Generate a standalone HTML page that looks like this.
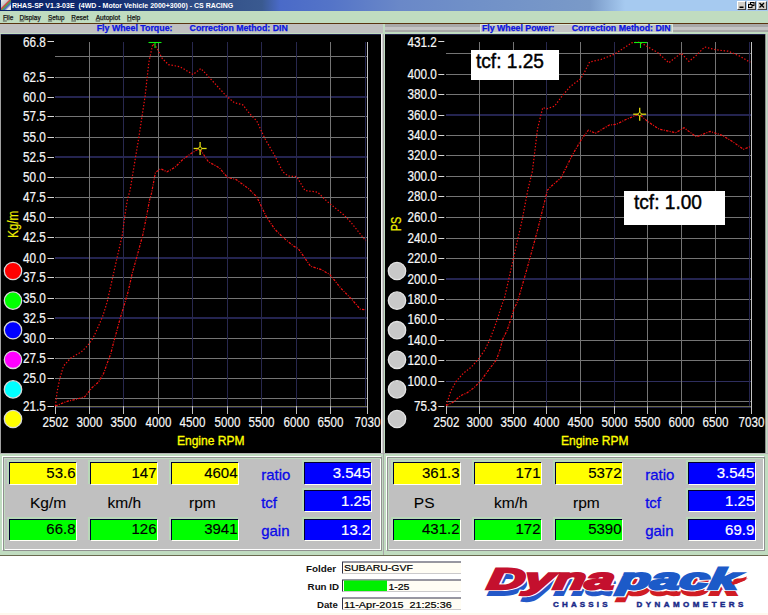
<!DOCTYPE html>
<html><head><meta charset="utf-8">
<style>
*{margin:0;padding:0;box-sizing:border-box}
html,body{width:768px;height:615px;overflow:hidden;background:#ffffff;font-family:"Liberation Sans", sans-serif}
.a{position:absolute}
svg{position:absolute;left:0;top:0}
</style></head><body>
<div class="a" style="left:0;top:0;width:768px;height:11px;background:linear-gradient(90deg,#0a246a 0,#0f2a70 100px,#2e4a84 180px,#3a5a90 262px,#4a6ac8 280px,#5474c8 330px,#6a88c8 400px,#7090c8 470px,#7a9ac8 590px,#a6caf0 625px,#a6caf0 768px)"></div>
<div class="a" style="left:1px;top:0;width:9.5px;height:10px;background:linear-gradient(135deg,#f0f0f0 0%,#c8c8c8 35%,#d04848 45%,#50a050 55%,#4868c8 65%,#e8e8e8 80%)"></div>
<div class="a" style="left:737px;top:1px;width:8.5px;height:8.5px;background:#d4d0c8;border:1px solid;border-color:#fff #404040 #404040 #fff"></div>
<div class="a" style="left:746.5px;top:1px;width:9px;height:8.5px;background:#d4d0c8;border:1px solid;border-color:#fff #404040 #404040 #fff"></div>
<div class="a" style="left:757px;top:1px;width:9.5px;height:8.5px;background:#d4d0c8;border:1px solid;border-color:#fff #404040 #404040 #fff"></div>
<div class="a" style="left:0;top:11px;width:768px;height:12px;background:#c0dcc0"></div>
<div class="a" style="left:0;top:23px;width:768px;height:1px;background:#5a3410"></div>
<div class="a" style="left:0;top:24px;width:383px;height:10px;background:#c0c0c0"></div>
<div class="a" style="left:383px;top:24px;width:2px;height:10px;background:#c0dcc0"></div>
<div class="a" style="left:385px;top:24px;width:383px;height:10px;background:linear-gradient(180deg,#a8a8a8 0 2.6px,#c4c4c4 2.6px 5.7px,#a8a8a8 5.7px 8px,#c0dcc0 8px 10px)"></div>
<div class="a" style="left:480px;top:24px;width:193px;height:9px;background:#c4c4c4;border:1px solid #d8e8d8"></div>
<div class="a" style="left:0;top:33px;width:768px;height:1px;background:#c0dcc0"></div>
<div class="a" style="left:0;top:34px;width:1px;height:419px;background:#a0a0a0"></div>
<div class="a" style="left:1px;top:34px;width:380px;height:419px;background:#000;border-top:1px solid #202048"></div>
<div class="a" style="left:381px;top:34px;width:1px;height:419px;background:#f4f4f4"></div>
<div class="a" style="left:382px;top:34px;width:1px;height:419px;background:#d0d0d0"></div>
<div class="a" style="left:383px;top:34px;width:1px;height:419px;background:#a8a8a8"></div>
<div class="a" style="left:384px;top:34px;width:1px;height:419px;background:#c0dcc0"></div>
<div class="a" style="left:385px;top:34px;width:380px;height:419px;background:#000;border-top:1px solid #202048"></div>
<div class="a" style="left:765px;top:34px;width:3px;height:419px;background:linear-gradient(90deg,#909090 0 1px,#c0dcc0 1px 2px,#c4c4c4 2px 3px)"></div>
<div class="a" style="left:0;top:453px;width:768px;height:103px;background:#c0dcc0"></div>
<div class="a" style="left:0;top:453px;width:768px;height:1px;background:#b4b4b4"></div>
<div class="a" style="left:2px;top:456px;width:380px;height:95px;background:#c0c0c0;border:1px solid;border-color:#fff #909090 #909090 #fff;box-shadow:inset 1px 1px 0 #909090,inset 2px 2px 0 #c0dcc0,inset -1px -1px 0 #fff"></div>
<div class="a" style="left:386px;top:456px;width:379px;height:95px;background:#c0c0c0;border:1px solid;border-color:#fff #909090 #909090 #fff;box-shadow:inset 1px 1px 0 #909090,inset 2px 2px 0 #c0dcc0,inset -1px -1px 0 #fff"></div>
<div class="a" style="left:383px;top:453px;width:1px;height:102px;background:#a8a8a8"></div>
<div class="a" style="left:0;top:555px;width:768px;height:1px;background:#6a6a50"></div>
<div class="a" style="left:0;top:613px;width:768px;height:2px;background:#fff9ee"></div>
<svg width="768" height="615" font-family='"Liberation Sans", sans-serif'>
<text x="12.00" y="8.20" font-size="8" fill="#ffffff" text-anchor="start" font-weight="bold" textLength="221.30" lengthAdjust="spacingAndGlyphs" xml:space="preserve">RHAS-SP V1.3-03E &#160;(4WD - Motor Vehicle 2000+3000) - CS RACING</text>
<text x="2.90" y="19.80" font-size="8" fill="#101010" text-anchor="start" textLength="10.40" lengthAdjust="spacingAndGlyphs" stroke="#101010" stroke-width="0.25">File</text>
<line x1="2.90" y1="21.00" x2="6.84" y2="21.00" stroke="#303030" stroke-width="0.8"/>
<text x="19.50" y="19.80" font-size="8" fill="#101010" text-anchor="start" textLength="21.10" lengthAdjust="spacingAndGlyphs" stroke="#101010" stroke-width="0.25">Display</text>
<line x1="19.50" y1="21.00" x2="24.15" y2="21.00" stroke="#303030" stroke-width="0.8"/>
<text x="47.90" y="19.80" font-size="8" fill="#101010" text-anchor="start" textLength="16.60" lengthAdjust="spacingAndGlyphs" stroke="#101010" stroke-width="0.25">Setup</text>
<line x1="47.90" y1="21.00" x2="52.14" y2="21.00" stroke="#303030" stroke-width="0.8"/>
<text x="71.30" y="19.80" font-size="8" fill="#101010" text-anchor="start" textLength="17.00" lengthAdjust="spacingAndGlyphs" stroke="#101010" stroke-width="0.25">Reset</text>
<line x1="71.30" y1="21.00" x2="76.00" y2="21.00" stroke="#303030" stroke-width="0.8"/>
<text x="95.70" y="19.80" font-size="8" fill="#101010" text-anchor="start" textLength="24.40" lengthAdjust="spacingAndGlyphs" stroke="#101010" stroke-width="0.25">Autoplot</text>
<line x1="95.70" y1="21.00" x2="100.14" y2="21.00" stroke="#303030" stroke-width="0.8"/>
<text x="127.00" y="19.80" font-size="8" fill="#101010" text-anchor="start" textLength="13.20" lengthAdjust="spacingAndGlyphs" stroke="#101010" stroke-width="0.25">Help</text>
<line x1="127.00" y1="21.00" x2="131.64" y2="21.00" stroke="#303030" stroke-width="0.8"/>
<text x="96.70" y="31.00" font-size="9" fill="#0a14e0" text-anchor="start" font-weight="bold" textLength="75.80" lengthAdjust="spacingAndGlyphs" stroke="#0a14e0" stroke-width="0.25">Fly Wheel Torque:</text>
<text x="189.60" y="31.00" font-size="9" fill="#0a14e0" text-anchor="start" font-weight="bold" textLength="98.10" lengthAdjust="spacingAndGlyphs" stroke="#0a14e0" stroke-width="0.25">Correction Method: DIN</text>
<text x="482.00" y="31.00" font-size="9" fill="#0a14e0" text-anchor="start" font-weight="bold" textLength="72.50" lengthAdjust="spacingAndGlyphs" stroke="#0a14e0" stroke-width="0.25">Fly Wheel Power:</text>
<text x="571.70" y="31.00" font-size="9" fill="#0a14e0" text-anchor="start" font-weight="bold" textLength="98.90" lengthAdjust="spacingAndGlyphs" stroke="#0a14e0" stroke-width="0.25">Correction Method: DIN</text>
<rect x="739.5" y="6.5" width="4" height="1.5" fill="#000"/>
<rect x="750.5" y="2.5" width="3.5" height="3" fill="none" stroke="#000" stroke-width="1"/>
<rect x="748.5" y="4.5" width="3.5" height="3" fill="#d4d0c8" stroke="#000" stroke-width="1"/>
<path d="M759.5 3 L764 7.5 M764 3 L759.5 7.5" stroke="#000" stroke-width="1.3"/>
<rect x="55.00" y="56.00" width="312.00" height="1.00" fill="#747474" />
<rect x="55.00" y="77.00" width="312.00" height="1.00" fill="#747474" />
<rect x="55.00" y="96.00" width="312.00" height="2.00" fill="#242450" />
<rect x="55.00" y="116.00" width="312.00" height="1.00" fill="#747474" />
<rect x="55.00" y="137.00" width="312.00" height="1.00" fill="#747474" />
<rect x="55.00" y="156.00" width="312.00" height="2.00" fill="#242450" />
<rect x="55.00" y="177.00" width="312.00" height="1.00" fill="#747474" />
<rect x="55.00" y="197.00" width="312.00" height="1.00" fill="#747474" />
<rect x="55.00" y="217.00" width="312.00" height="1.00" fill="#747474" />
<rect x="55.00" y="237.00" width="312.00" height="1.00" fill="#747474" />
<rect x="55.00" y="257.00" width="312.00" height="2.00" fill="#242450" />
<rect x="55.00" y="277.00" width="312.00" height="1.00" fill="#747474" />
<rect x="55.00" y="298.00" width="312.00" height="1.00" fill="#747474" />
<rect x="55.00" y="317.00" width="312.00" height="2.00" fill="#242450" />
<rect x="55.00" y="338.00" width="312.00" height="1.00" fill="#747474" />
<rect x="55.00" y="358.00" width="312.00" height="1.00" fill="#747474" />
<rect x="55.00" y="378.00" width="312.00" height="1.00" fill="#747474" />
<rect x="55.00" y="398.00" width="312.00" height="1.00" fill="#747474" />
<rect x="89.00" y="42.00" width="1.00" height="364.00" fill="#747474" />
<rect x="123.00" y="42.00" width="1.00" height="364.00" fill="#28284e" />
<rect x="158.00" y="42.00" width="1.00" height="364.00" fill="#747474" />
<rect x="192.00" y="42.00" width="1.00" height="364.00" fill="#28284e" />
<rect x="227.00" y="42.00" width="1.00" height="364.00" fill="#28284e" />
<rect x="261.00" y="42.00" width="1.00" height="364.00" fill="#28284e" />
<rect x="296.00" y="42.00" width="1.00" height="364.00" fill="#28284e" />
<rect x="330.00" y="42.00" width="1.00" height="364.00" fill="#747474" />
<rect x="55.00" y="406.00" width="312.00" height="1.00" fill="#6a6a4a" />
<rect x="55.00" y="407.00" width="312.00" height="1.00" fill="#22224a" />
<rect x="367.00" y="42.00" width="1.00" height="372.00" fill="#c4c4c4" />
<rect x="365.00" y="42.00" width="1.00" height="364.00" fill="#24244e" />
<rect x="55.00" y="406.00" width="1.00" height="8.00" fill="#c0c0c0" />
<rect x="89.00" y="406.00" width="1.00" height="8.00" fill="#c0c0c0" />
<rect x="123.00" y="406.00" width="1.00" height="8.00" fill="#c0c0c0" />
<rect x="158.00" y="406.00" width="1.00" height="8.00" fill="#c0c0c0" />
<rect x="192.00" y="406.00" width="1.00" height="8.00" fill="#c0c0c0" />
<rect x="227.00" y="406.00" width="1.00" height="8.00" fill="#c0c0c0" />
<rect x="261.00" y="406.00" width="1.00" height="8.00" fill="#c0c0c0" />
<rect x="296.00" y="406.00" width="1.00" height="8.00" fill="#c0c0c0" />
<rect x="330.00" y="406.00" width="1.00" height="8.00" fill="#c0c0c0" />
<text x="22.94" y="46.68" font-size="14.5" fill="#f8f8f8" text-anchor="start" textLength="22.86" lengthAdjust="spacingAndGlyphs" stroke="#f8f8f8" stroke-width="0.2">66.8</text>
<rect x="47.50" y="41.00" width="6.50" height="1.00" fill="#d8d8d8" />
<text x="22.94" y="82.30" font-size="14.5" fill="#f8f8f8" text-anchor="start" textLength="22.86" lengthAdjust="spacingAndGlyphs" stroke="#f8f8f8" stroke-width="0.2">62.5</text>
<rect x="47.50" y="77.00" width="6.50" height="1.00" fill="#d8d8d8" />
<text x="22.94" y="101.80" font-size="14.5" fill="#f8f8f8" text-anchor="start" textLength="22.86" lengthAdjust="spacingAndGlyphs" stroke="#f8f8f8" stroke-width="0.2">60.0</text>
<rect x="47.50" y="97.00" width="6.50" height="1.00" fill="#d8d8d8" />
<text x="22.94" y="121.30" font-size="14.5" fill="#f8f8f8" text-anchor="start" textLength="22.86" lengthAdjust="spacingAndGlyphs" stroke="#f8f8f8" stroke-width="0.2">57.5</text>
<rect x="47.50" y="116.00" width="6.50" height="1.00" fill="#d8d8d8" />
<text x="22.94" y="142.30" font-size="14.5" fill="#f8f8f8" text-anchor="start" textLength="22.86" lengthAdjust="spacingAndGlyphs" stroke="#f8f8f8" stroke-width="0.2">55.0</text>
<rect x="47.50" y="137.00" width="6.50" height="1.00" fill="#d8d8d8" />
<text x="22.94" y="161.80" font-size="14.5" fill="#f8f8f8" text-anchor="start" textLength="22.86" lengthAdjust="spacingAndGlyphs" stroke="#f8f8f8" stroke-width="0.2">52.5</text>
<rect x="47.50" y="157.00" width="6.50" height="1.00" fill="#d8d8d8" />
<text x="22.94" y="182.30" font-size="14.5" fill="#f8f8f8" text-anchor="start" textLength="22.86" lengthAdjust="spacingAndGlyphs" stroke="#f8f8f8" stroke-width="0.2">50.0</text>
<rect x="47.50" y="177.00" width="6.50" height="1.00" fill="#d8d8d8" />
<text x="22.94" y="202.30" font-size="14.5" fill="#f8f8f8" text-anchor="start" textLength="22.86" lengthAdjust="spacingAndGlyphs" stroke="#f8f8f8" stroke-width="0.2">47.5</text>
<rect x="47.50" y="197.00" width="6.50" height="1.00" fill="#d8d8d8" />
<text x="22.94" y="222.30" font-size="14.5" fill="#f8f8f8" text-anchor="start" textLength="22.86" lengthAdjust="spacingAndGlyphs" stroke="#f8f8f8" stroke-width="0.2">45.0</text>
<rect x="47.50" y="217.00" width="6.50" height="1.00" fill="#d8d8d8" />
<text x="22.94" y="242.30" font-size="14.5" fill="#f8f8f8" text-anchor="start" textLength="22.86" lengthAdjust="spacingAndGlyphs" stroke="#f8f8f8" stroke-width="0.2">42.5</text>
<rect x="47.50" y="237.00" width="6.50" height="1.00" fill="#d8d8d8" />
<text x="22.94" y="262.80" font-size="14.5" fill="#f8f8f8" text-anchor="start" textLength="22.86" lengthAdjust="spacingAndGlyphs" stroke="#f8f8f8" stroke-width="0.2">40.0</text>
<rect x="47.50" y="258.00" width="6.50" height="1.00" fill="#d8d8d8" />
<text x="22.94" y="282.30" font-size="14.5" fill="#f8f8f8" text-anchor="start" textLength="22.86" lengthAdjust="spacingAndGlyphs" stroke="#f8f8f8" stroke-width="0.2">37.5</text>
<rect x="47.50" y="277.00" width="6.50" height="1.00" fill="#d8d8d8" />
<text x="22.94" y="303.30" font-size="14.5" fill="#f8f8f8" text-anchor="start" textLength="22.86" lengthAdjust="spacingAndGlyphs" stroke="#f8f8f8" stroke-width="0.2">35.0</text>
<rect x="47.50" y="298.00" width="6.50" height="1.00" fill="#d8d8d8" />
<text x="22.94" y="322.80" font-size="14.5" fill="#f8f8f8" text-anchor="start" textLength="22.86" lengthAdjust="spacingAndGlyphs" stroke="#f8f8f8" stroke-width="0.2">32.5</text>
<rect x="47.50" y="318.00" width="6.50" height="1.00" fill="#d8d8d8" />
<text x="22.94" y="343.30" font-size="14.5" fill="#f8f8f8" text-anchor="start" textLength="22.86" lengthAdjust="spacingAndGlyphs" stroke="#f8f8f8" stroke-width="0.2">30.0</text>
<rect x="47.50" y="338.00" width="6.50" height="1.00" fill="#d8d8d8" />
<text x="22.94" y="363.30" font-size="14.5" fill="#f8f8f8" text-anchor="start" textLength="22.86" lengthAdjust="spacingAndGlyphs" stroke="#f8f8f8" stroke-width="0.2">27.5</text>
<rect x="47.50" y="358.00" width="6.50" height="1.00" fill="#d8d8d8" />
<text x="22.94" y="383.30" font-size="14.5" fill="#f8f8f8" text-anchor="start" textLength="22.86" lengthAdjust="spacingAndGlyphs" stroke="#f8f8f8" stroke-width="0.2">25.0</text>
<rect x="47.50" y="378.00" width="6.50" height="1.00" fill="#d8d8d8" />
<text x="22.94" y="411.35" font-size="14.5" fill="#f8f8f8" text-anchor="start" textLength="22.86" lengthAdjust="spacingAndGlyphs" stroke="#f8f8f8" stroke-width="0.2">21.5</text>
<rect x="47.50" y="406.00" width="6.50" height="1.00" fill="#d8d8d8" />
<text x="42.60" y="426.70" font-size="15" fill="#f8f8f8" text-anchor="start" textLength="25.80" lengthAdjust="spacingAndGlyphs" stroke="#f8f8f8" stroke-width="0.2">2502</text>
<text x="76.60" y="426.70" font-size="15" fill="#f8f8f8" text-anchor="start" textLength="25.80" lengthAdjust="spacingAndGlyphs" stroke="#f8f8f8" stroke-width="0.2">3000</text>
<text x="110.60" y="426.70" font-size="15" fill="#f8f8f8" text-anchor="start" textLength="25.80" lengthAdjust="spacingAndGlyphs" stroke="#f8f8f8" stroke-width="0.2">3500</text>
<text x="145.60" y="426.70" font-size="15" fill="#f8f8f8" text-anchor="start" textLength="25.80" lengthAdjust="spacingAndGlyphs" stroke="#f8f8f8" stroke-width="0.2">4000</text>
<text x="179.60" y="426.70" font-size="15" fill="#f8f8f8" text-anchor="start" textLength="25.80" lengthAdjust="spacingAndGlyphs" stroke="#f8f8f8" stroke-width="0.2">4500</text>
<text x="214.60" y="426.70" font-size="15" fill="#f8f8f8" text-anchor="start" textLength="25.80" lengthAdjust="spacingAndGlyphs" stroke="#f8f8f8" stroke-width="0.2">5000</text>
<text x="248.60" y="426.70" font-size="15" fill="#f8f8f8" text-anchor="start" textLength="25.80" lengthAdjust="spacingAndGlyphs" stroke="#f8f8f8" stroke-width="0.2">5500</text>
<text x="283.60" y="426.70" font-size="15" fill="#f8f8f8" text-anchor="start" textLength="25.80" lengthAdjust="spacingAndGlyphs" stroke="#f8f8f8" stroke-width="0.2">6000</text>
<text x="317.60" y="426.70" font-size="15" fill="#f8f8f8" text-anchor="start" textLength="25.80" lengthAdjust="spacingAndGlyphs" stroke="#f8f8f8" stroke-width="0.2">6500</text>
<text x="354.60" y="426.70" font-size="15" fill="#f8f8f8" text-anchor="start" textLength="25.80" lengthAdjust="spacingAndGlyphs" stroke="#f8f8f8" stroke-width="0.2">7030</text>
<rect x="446.00" y="53.00" width="305.00" height="1.00" fill="#747474" />
<rect x="446.00" y="74.00" width="305.00" height="1.00" fill="#747474" />
<rect x="446.00" y="94.00" width="305.00" height="1.00" fill="#747474" />
<rect x="446.00" y="114.00" width="305.00" height="2.00" fill="#242450" />
<rect x="446.00" y="135.00" width="305.00" height="1.00" fill="#747474" />
<rect x="446.00" y="155.00" width="305.00" height="1.00" fill="#747474" />
<rect x="446.00" y="176.00" width="305.00" height="1.00" fill="#747474" />
<rect x="446.00" y="196.00" width="305.00" height="1.00" fill="#747474" />
<rect x="446.00" y="217.00" width="305.00" height="1.00" fill="#747474" />
<rect x="446.00" y="238.00" width="305.00" height="1.00" fill="#747474" />
<rect x="446.00" y="258.00" width="305.00" height="1.00" fill="#747474" />
<rect x="446.00" y="278.00" width="305.00" height="2.00" fill="#242450" />
<rect x="446.00" y="299.00" width="305.00" height="1.00" fill="#747474" />
<rect x="446.00" y="319.00" width="305.00" height="1.00" fill="#747474" />
<rect x="446.00" y="340.00" width="305.00" height="1.00" fill="#747474" />
<rect x="446.00" y="360.00" width="305.00" height="1.00" fill="#747474" />
<rect x="446.00" y="381.00" width="305.00" height="1.00" fill="#2e2e5e" />
<rect x="446.00" y="401.00" width="305.00" height="1.00" fill="#747474" />
<rect x="479.00" y="42.00" width="1.00" height="364.00" fill="#747474" />
<rect x="513.00" y="42.00" width="1.00" height="364.00" fill="#747474" />
<rect x="546.00" y="42.00" width="1.00" height="364.00" fill="#28284e" />
<rect x="580.00" y="42.00" width="1.00" height="364.00" fill="#747474" />
<rect x="614.00" y="42.00" width="1.00" height="364.00" fill="#28284e" />
<rect x="647.00" y="42.00" width="1.00" height="364.00" fill="#747474" />
<rect x="681.00" y="42.00" width="1.00" height="364.00" fill="#747474" />
<rect x="715.00" y="42.00" width="1.00" height="364.00" fill="#747474" />
<rect x="446.00" y="406.00" width="305.00" height="1.00" fill="#6a6a4a" />
<rect x="446.00" y="407.00" width="305.00" height="1.00" fill="#22224a" />
<rect x="751.00" y="42.00" width="1.00" height="372.00" fill="#c4c4c4" />
<rect x="749.00" y="42.00" width="1.00" height="364.00" fill="#24244e" />
<rect x="446.00" y="406.00" width="1.00" height="8.00" fill="#c0c0c0" />
<rect x="479.00" y="406.00" width="1.00" height="8.00" fill="#c0c0c0" />
<rect x="513.00" y="406.00" width="1.00" height="8.00" fill="#c0c0c0" />
<rect x="546.00" y="406.00" width="1.00" height="8.00" fill="#c0c0c0" />
<rect x="580.00" y="406.00" width="1.00" height="8.00" fill="#c0c0c0" />
<rect x="614.00" y="406.00" width="1.00" height="8.00" fill="#c0c0c0" />
<rect x="647.00" y="406.00" width="1.00" height="8.00" fill="#c0c0c0" />
<rect x="681.00" y="406.00" width="1.00" height="8.00" fill="#c0c0c0" />
<rect x="715.00" y="406.00" width="1.00" height="8.00" fill="#c0c0c0" />
<text x="407.41" y="46.76" font-size="14.5" fill="#f8f8f8" text-anchor="start" textLength="29.39" lengthAdjust="spacingAndGlyphs" stroke="#f8f8f8" stroke-width="0.2">431.2</text>
<rect x="438.30" y="41.00" width="6.00" height="1.00" fill="#d8d8d8" />
<text x="407.41" y="79.30" font-size="14.5" fill="#f8f8f8" text-anchor="start" textLength="29.39" lengthAdjust="spacingAndGlyphs" stroke="#f8f8f8" stroke-width="0.2">400.0</text>
<rect x="438.30" y="74.00" width="6.00" height="1.00" fill="#d8d8d8" />
<text x="407.41" y="99.30" font-size="14.5" fill="#f8f8f8" text-anchor="start" textLength="29.39" lengthAdjust="spacingAndGlyphs" stroke="#f8f8f8" stroke-width="0.2">380.0</text>
<rect x="438.30" y="94.00" width="6.00" height="1.00" fill="#d8d8d8" />
<text x="407.41" y="119.80" font-size="14.5" fill="#f8f8f8" text-anchor="start" textLength="29.39" lengthAdjust="spacingAndGlyphs" stroke="#f8f8f8" stroke-width="0.2">360.0</text>
<rect x="438.30" y="115.00" width="6.00" height="1.00" fill="#d8d8d8" />
<text x="407.41" y="140.30" font-size="14.5" fill="#f8f8f8" text-anchor="start" textLength="29.39" lengthAdjust="spacingAndGlyphs" stroke="#f8f8f8" stroke-width="0.2">340.0</text>
<rect x="438.30" y="135.00" width="6.00" height="1.00" fill="#d8d8d8" />
<text x="407.41" y="160.30" font-size="14.5" fill="#f8f8f8" text-anchor="start" textLength="29.39" lengthAdjust="spacingAndGlyphs" stroke="#f8f8f8" stroke-width="0.2">320.0</text>
<rect x="438.30" y="155.00" width="6.00" height="1.00" fill="#d8d8d8" />
<text x="407.41" y="181.30" font-size="14.5" fill="#f8f8f8" text-anchor="start" textLength="29.39" lengthAdjust="spacingAndGlyphs" stroke="#f8f8f8" stroke-width="0.2">300.0</text>
<rect x="438.30" y="176.00" width="6.00" height="1.00" fill="#d8d8d8" />
<text x="407.41" y="201.30" font-size="14.5" fill="#f8f8f8" text-anchor="start" textLength="29.39" lengthAdjust="spacingAndGlyphs" stroke="#f8f8f8" stroke-width="0.2">280.0</text>
<rect x="438.30" y="196.00" width="6.00" height="1.00" fill="#d8d8d8" />
<text x="407.41" y="222.30" font-size="14.5" fill="#f8f8f8" text-anchor="start" textLength="29.39" lengthAdjust="spacingAndGlyphs" stroke="#f8f8f8" stroke-width="0.2">260.0</text>
<rect x="438.30" y="217.00" width="6.00" height="1.00" fill="#d8d8d8" />
<text x="407.41" y="243.30" font-size="14.5" fill="#f8f8f8" text-anchor="start" textLength="29.39" lengthAdjust="spacingAndGlyphs" stroke="#f8f8f8" stroke-width="0.2">240.0</text>
<rect x="438.30" y="238.00" width="6.00" height="1.00" fill="#d8d8d8" />
<text x="407.41" y="263.30" font-size="14.5" fill="#f8f8f8" text-anchor="start" textLength="29.39" lengthAdjust="spacingAndGlyphs" stroke="#f8f8f8" stroke-width="0.2">220.0</text>
<rect x="438.30" y="258.00" width="6.00" height="1.00" fill="#d8d8d8" />
<text x="407.41" y="283.80" font-size="14.5" fill="#f8f8f8" text-anchor="start" textLength="29.39" lengthAdjust="spacingAndGlyphs" stroke="#f8f8f8" stroke-width="0.2">200.0</text>
<rect x="438.30" y="279.00" width="6.00" height="1.00" fill="#d8d8d8" />
<text x="407.41" y="304.30" font-size="14.5" fill="#f8f8f8" text-anchor="start" textLength="29.39" lengthAdjust="spacingAndGlyphs" stroke="#f8f8f8" stroke-width="0.2">180.0</text>
<rect x="438.30" y="299.00" width="6.00" height="1.00" fill="#d8d8d8" />
<text x="407.41" y="324.30" font-size="14.5" fill="#f8f8f8" text-anchor="start" textLength="29.39" lengthAdjust="spacingAndGlyphs" stroke="#f8f8f8" stroke-width="0.2">160.0</text>
<rect x="438.30" y="319.00" width="6.00" height="1.00" fill="#d8d8d8" />
<text x="407.41" y="345.30" font-size="14.5" fill="#f8f8f8" text-anchor="start" textLength="29.39" lengthAdjust="spacingAndGlyphs" stroke="#f8f8f8" stroke-width="0.2">140.0</text>
<rect x="438.30" y="340.00" width="6.00" height="1.00" fill="#d8d8d8" />
<text x="407.41" y="365.30" font-size="14.5" fill="#f8f8f8" text-anchor="start" textLength="29.39" lengthAdjust="spacingAndGlyphs" stroke="#f8f8f8" stroke-width="0.2">120.0</text>
<rect x="438.30" y="360.00" width="6.00" height="1.00" fill="#d8d8d8" />
<text x="407.41" y="385.80" font-size="14.5" fill="#f8f8f8" text-anchor="start" textLength="29.39" lengthAdjust="spacingAndGlyphs" stroke="#f8f8f8" stroke-width="0.2">100.0</text>
<rect x="438.30" y="381.00" width="6.00" height="1.00" fill="#d8d8d8" />
<text x="413.94" y="410.81" font-size="14.5" fill="#f8f8f8" text-anchor="start" textLength="22.86" lengthAdjust="spacingAndGlyphs" stroke="#f8f8f8" stroke-width="0.2">75.3</text>
<rect x="438.30" y="406.00" width="6.00" height="1.00" fill="#d8d8d8" />
<text x="433.60" y="426.70" font-size="15" fill="#f8f8f8" text-anchor="start" textLength="25.80" lengthAdjust="spacingAndGlyphs" stroke="#f8f8f8" stroke-width="0.2">2502</text>
<text x="466.60" y="426.70" font-size="15" fill="#f8f8f8" text-anchor="start" textLength="25.80" lengthAdjust="spacingAndGlyphs" stroke="#f8f8f8" stroke-width="0.2">3000</text>
<text x="500.60" y="426.70" font-size="15" fill="#f8f8f8" text-anchor="start" textLength="25.80" lengthAdjust="spacingAndGlyphs" stroke="#f8f8f8" stroke-width="0.2">3500</text>
<text x="533.60" y="426.70" font-size="15" fill="#f8f8f8" text-anchor="start" textLength="25.80" lengthAdjust="spacingAndGlyphs" stroke="#f8f8f8" stroke-width="0.2">4000</text>
<text x="567.60" y="426.70" font-size="15" fill="#f8f8f8" text-anchor="start" textLength="25.80" lengthAdjust="spacingAndGlyphs" stroke="#f8f8f8" stroke-width="0.2">4500</text>
<text x="601.60" y="426.70" font-size="15" fill="#f8f8f8" text-anchor="start" textLength="25.80" lengthAdjust="spacingAndGlyphs" stroke="#f8f8f8" stroke-width="0.2">5000</text>
<text x="634.60" y="426.70" font-size="15" fill="#f8f8f8" text-anchor="start" textLength="25.80" lengthAdjust="spacingAndGlyphs" stroke="#f8f8f8" stroke-width="0.2">5500</text>
<text x="668.60" y="426.70" font-size="15" fill="#f8f8f8" text-anchor="start" textLength="25.80" lengthAdjust="spacingAndGlyphs" stroke="#f8f8f8" stroke-width="0.2">6000</text>
<text x="702.60" y="426.70" font-size="15" fill="#f8f8f8" text-anchor="start" textLength="25.80" lengthAdjust="spacingAndGlyphs" stroke="#f8f8f8" stroke-width="0.2">6500</text>
<text x="738.60" y="426.70" font-size="15" fill="#f8f8f8" text-anchor="start" textLength="25.80" lengthAdjust="spacingAndGlyphs" stroke="#f8f8f8" stroke-width="0.2">7030</text>
<polyline points="55.4,406.0 57.2,391.2 59.8,378.7 63.4,366.2 70.6,358.1 81.3,351.9 87.6,345.6 92.9,338.5 97.4,328.6 102.8,316.1 107.2,301.8 112.6,277.8 117.4,256.3 122.3,234.9 125.2,213.4 127.2,200.7 130.1,190.0 138.4,140.0 145.0,97.0 148.9,62.0 152.8,43.8 156.7,47.7 161.9,58.0 168.4,64.6 180.0,66.7 193.0,74.5 200.9,68.5 211.0,79.3 226.3,96.0 234.5,102.8 242.8,104.8 249.8,113.9 256.7,120.8 265.0,138.8 274.6,155.4 282.9,172.0 288.4,176.0 296.7,176.6 305.0,190.5 317.5,192.1 327.1,201.4 343.7,214.8 350.6,222.0 365.8,240.9" fill="none" stroke="#f01010" stroke-width="1.2" stroke-dasharray="1.4 1.8"/>
<polyline points="55.4,406.0 60.7,403.8 67.9,401.1 77.7,398.9 84.9,396.6 92.0,387.7 98.3,382.3 103.7,373.3 108.1,360.8 110.8,353.7 113.5,342.9 116.2,333.1 119.8,319.7 123.3,308.0 128.2,291.5 132.1,273.9 137.0,256.3 142.8,234.9 146.7,215.4 149.6,199.8 151.5,193.4 155.4,172.6 160.6,168.7 167.0,171.8 174.9,167.4 182.7,159.6 191.8,153.0 199.6,148.4 208.3,161.7 219.3,167.8 227.6,177.5 235.9,179.4 248.4,188.5 256.7,196.8 266.3,216.6 274.6,229.0 282.9,237.3 294.0,246.4 298.1,248.4 310.6,266.3 321.6,269.7 329.9,274.6 341.0,288.4 350.6,298.1 360.3,309.2 365.8,309.7" fill="none" stroke="#f01010" stroke-width="1.2" stroke-dasharray="2.4 1.3 1 1.3"/>
<polyline points="446.3,405.5 450.7,391.2 456.1,381.4 463.3,373.3 471.3,367.1 478.5,359.0 484.7,350.1 489.2,341.1 493.7,329.5 497.2,319.7 501.7,305.4 504.5,298.0 513.5,258.1 522.4,218.7 527.8,190.0 532.4,171.3 537.6,128.4 542.8,107.5 546.7,108.8 554.5,106.2 562.3,95.8 570.1,86.7 580.5,78.9 584.4,72.4 589.6,62.0 601.0,59.5 614.9,54.0 623.2,48.4 631.5,42.9 639.8,42.1 648.0,47.0 657.7,52.6 668.8,62.8 681.2,53.1 689.0,61.4 696.4,55.3 704.7,47.0 715.8,49.8 728.2,51.2 739.3,55.9 750.3,62.3" fill="none" stroke="#f01010" stroke-width="1.2" stroke-dasharray="1.4 1.8"/>
<polyline points="446.3,405.5 453.4,402.0 460.6,395.7 466.8,393.0 474.0,387.7 481.1,380.5 487.4,371.6 496.4,359.9 499.9,350.1 502.6,339.4 507.1,330.4 510.7,319.7 513.3,310.7 517.8,300.9 526.0,272.4 536.8,233.0 547.5,190.0 550.6,186.9 561.0,177.8 572.7,154.4 581.8,138.8 588.3,130.2 595.5,133.3 609.3,125.0 616.3,124.4 625.9,119.5 639.2,114.2 648.0,121.7 659.1,129.1 675.7,132.7 684.0,127.8 696.4,136.9 710.2,131.4 722.7,135.5 733.7,142.4 743.4,149.3 750.3,146.6" fill="none" stroke="#f01010" stroke-width="1.2" stroke-dasharray="2.4 1.3 1 1.3"/>
<line x1="148.50" y1="42.50" x2="161.50" y2="42.50" stroke="#10f010" stroke-width="1.1"/>
<line x1="155.00" y1="42.00" x2="155.00" y2="48.00" stroke="#10f010" stroke-width="1.1"/>
<line x1="193.60" y1="148.50" x2="206.60" y2="148.50" stroke="#e0dc10" stroke-width="1.3"/>
<line x1="200.10" y1="142.00" x2="200.10" y2="155.00" stroke="#e0dc10" stroke-width="1.3"/>
<circle cx="200.1" cy="148.5" r="1.6" fill="#000" stroke="#e0dc10" stroke-width="0.9"/>
<line x1="634.00" y1="42.50" x2="647.00" y2="42.50" stroke="#10f010" stroke-width="1.1"/>
<line x1="640.50" y1="42.00" x2="640.50" y2="48.00" stroke="#10f010" stroke-width="1.1"/>
<line x1="633.20" y1="114.20" x2="646.20" y2="114.20" stroke="#e0dc10" stroke-width="1.3"/>
<line x1="639.70" y1="107.70" x2="639.70" y2="120.70" stroke="#e0dc10" stroke-width="1.3"/>
<circle cx="639.7" cy="114.2" r="1.6" fill="#000" stroke="#e0dc10" stroke-width="0.9"/>
<rect x="471.00" y="50.00" width="88.00" height="30.00" fill="#fff" />
<text x="476.00" y="67.80" font-size="20.5" fill="#000" text-anchor="start" textLength="68.00" lengthAdjust="spacingAndGlyphs" stroke="#000" stroke-width="0.45">tcf: 1.25</text>
<rect x="624.00" y="191.00" width="101.00" height="34.00" fill="#fff" />
<text x="634.00" y="208.60" font-size="20.5" fill="#000" text-anchor="start" textLength="68.00" lengthAdjust="spacingAndGlyphs" stroke="#000" stroke-width="0.45">tcf: 1.00</text>
<text x="176.90" y="444.90" font-size="13.5" fill="#ffff00" text-anchor="start" textLength="67.70" lengthAdjust="spacingAndGlyphs" stroke="#ffff00" stroke-width="0.35">Engine RPM</text>
<text x="560.90" y="444.90" font-size="13.5" fill="#ffff00" text-anchor="start" textLength="67.70" lengthAdjust="spacingAndGlyphs" stroke="#ffff00" stroke-width="0.35">Engine RPM</text>
<text transform="translate(18.3,238) rotate(-90)" font-size="15.5" fill="#f0f000" textLength="27.3" lengthAdjust="spacingAndGlyphs" stroke="#f0f000" stroke-width="0.2">Kg/m</text>
<text transform="translate(401.3,231.2) rotate(-90)" font-size="14.5" fill="#f0f000" textLength="14.6" lengthAdjust="spacingAndGlyphs" stroke="#f0f000" stroke-width="0.2">PS</text>
<circle cx="13" cy="271.0" r="8.7" fill="#ff0000" stroke="#d8d8d8" stroke-width="1.3"/>
<circle cx="397" cy="271.0" r="8.7" fill="#c8c8c8" stroke="#e4e4e4" stroke-width="1.3"/>
<circle cx="13" cy="300.6" r="8.7" fill="#00ff00" stroke="#d8d8d8" stroke-width="1.3"/>
<circle cx="397" cy="300.6" r="8.7" fill="#c8c8c8" stroke="#e4e4e4" stroke-width="1.3"/>
<circle cx="13" cy="330.2" r="8.7" fill="#0000ff" stroke="#d8d8d8" stroke-width="1.3"/>
<circle cx="397" cy="330.2" r="8.7" fill="#c8c8c8" stroke="#e4e4e4" stroke-width="1.3"/>
<circle cx="13" cy="359.8" r="8.7" fill="#ff00ff" stroke="#d8d8d8" stroke-width="1.3"/>
<circle cx="397" cy="359.8" r="8.7" fill="#c8c8c8" stroke="#e4e4e4" stroke-width="1.3"/>
<circle cx="13" cy="389.4" r="8.7" fill="#00ffff" stroke="#d8d8d8" stroke-width="1.3"/>
<circle cx="397" cy="389.4" r="8.7" fill="#c8c8c8" stroke="#e4e4e4" stroke-width="1.3"/>
<circle cx="13" cy="419.0" r="8.7" fill="#ffff00" stroke="#d8d8d8" stroke-width="1.3"/>
<circle cx="397" cy="419.0" r="8.7" fill="#c8c8c8" stroke="#e4e4e4" stroke-width="1.3"/>
<rect x="7.00" y="460.00" width="69.00" height="2.00" fill="#b8d8b8" />
<rect x="7.00" y="460.00" width="2.00" height="24.00" fill="#b8d8b8" />
<rect x="9.00" y="462.00" width="67.00" height="22.00" fill="#000030" />
<rect x="10.00" y="463.00" width="67.00" height="22.00" fill="#fffff8" />
<rect x="10.00" y="463.00" width="66.00" height="21.00" fill="#ffff00" />
<rect x="7.00" y="517.00" width="69.00" height="2.00" fill="#b8d8b8" />
<rect x="7.00" y="517.00" width="2.00" height="23.00" fill="#b8d8b8" />
<rect x="9.00" y="519.00" width="67.00" height="21.00" fill="#000030" />
<rect x="10.00" y="520.00" width="67.00" height="21.00" fill="#fffff8" />
<rect x="10.00" y="520.00" width="66.00" height="20.00" fill="#00ff00" />
<text x="46.31" y="478.20" font-size="15" fill="#000" text-anchor="start" stroke="#000" stroke-width="0.15">53.6</text>
<text x="46.31" y="534.40" font-size="15" fill="#000" text-anchor="start" stroke="#000" stroke-width="0.15">66.8</text>
<rect x="88.00" y="460.00" width="69.00" height="2.00" fill="#b8d8b8" />
<rect x="88.00" y="460.00" width="2.00" height="24.00" fill="#b8d8b8" />
<rect x="90.00" y="462.00" width="67.00" height="22.00" fill="#000030" />
<rect x="91.00" y="463.00" width="67.00" height="22.00" fill="#fffff8" />
<rect x="91.00" y="463.00" width="66.00" height="21.00" fill="#ffff00" />
<rect x="88.00" y="517.00" width="69.00" height="2.00" fill="#b8d8b8" />
<rect x="88.00" y="517.00" width="2.00" height="23.00" fill="#b8d8b8" />
<rect x="90.00" y="519.00" width="67.00" height="21.00" fill="#000030" />
<rect x="91.00" y="520.00" width="67.00" height="21.00" fill="#fffff8" />
<rect x="91.00" y="520.00" width="66.00" height="20.00" fill="#00ff00" />
<text x="131.48" y="478.20" font-size="15" fill="#000" text-anchor="start" stroke="#000" stroke-width="0.15">147</text>
<text x="131.48" y="534.40" font-size="15" fill="#000" text-anchor="start" stroke="#000" stroke-width="0.15">126</text>
<rect x="169.00" y="460.00" width="69.00" height="2.00" fill="#b8d8b8" />
<rect x="169.00" y="460.00" width="2.00" height="24.00" fill="#b8d8b8" />
<rect x="171.00" y="462.00" width="67.00" height="22.00" fill="#000030" />
<rect x="172.00" y="463.00" width="67.00" height="22.00" fill="#fffff8" />
<rect x="172.00" y="463.00" width="66.00" height="21.00" fill="#ffff00" />
<rect x="169.00" y="517.00" width="69.00" height="2.00" fill="#b8d8b8" />
<rect x="169.00" y="517.00" width="2.00" height="23.00" fill="#b8d8b8" />
<rect x="171.00" y="519.00" width="67.00" height="21.00" fill="#000030" />
<rect x="172.00" y="520.00" width="67.00" height="21.00" fill="#fffff8" />
<rect x="172.00" y="520.00" width="66.00" height="20.00" fill="#00ff00" />
<text x="204.13" y="478.20" font-size="15" fill="#000" text-anchor="start" stroke="#000" stroke-width="0.15">4604</text>
<text x="204.13" y="534.40" font-size="15" fill="#000" text-anchor="start" stroke="#000" stroke-width="0.15">3941</text>
<rect x="302.00" y="460.00" width="69.00" height="2.00" fill="#b8d8b8" />
<rect x="302.00" y="460.00" width="2.00" height="24.00" fill="#b8d8b8" />
<rect x="304.00" y="462.00" width="67.00" height="22.00" fill="#000030" />
<rect x="305.00" y="463.00" width="67.00" height="22.00" fill="#fffff8" />
<rect x="305.00" y="463.00" width="66.00" height="21.00" fill="#0000ff" />
<text x="332.77" y="478.20" font-size="15" fill="#fff" text-anchor="start" stroke="#fff" stroke-width="0.2">3.545</text>
<rect x="302.00" y="488.00" width="69.00" height="2.00" fill="#b8d8b8" />
<rect x="302.00" y="488.00" width="2.00" height="23.00" fill="#b8d8b8" />
<rect x="304.00" y="490.00" width="67.00" height="21.00" fill="#000030" />
<rect x="305.00" y="491.00" width="67.00" height="21.00" fill="#fffff8" />
<rect x="305.00" y="491.00" width="66.00" height="20.00" fill="#0000ff" />
<text x="341.11" y="505.90" font-size="15" fill="#fff" text-anchor="start" stroke="#fff" stroke-width="0.2">1.25</text>
<rect x="302.00" y="517.00" width="69.00" height="2.00" fill="#b8d8b8" />
<rect x="302.00" y="517.00" width="2.00" height="23.00" fill="#b8d8b8" />
<rect x="304.00" y="519.00" width="67.00" height="21.00" fill="#000030" />
<rect x="305.00" y="520.00" width="67.00" height="21.00" fill="#fffff8" />
<rect x="305.00" y="520.00" width="66.00" height="20.00" fill="#0000ff" />
<text x="341.11" y="534.80" font-size="15" fill="#fff" text-anchor="start" stroke="#fff" stroke-width="0.2">13.2</text>
<text x="261.20" y="480.20" font-size="15" fill="#0a0ae8" text-anchor="start" stroke="#0a0ae8" stroke-width="0.3">ratio</text>
<text x="261.20" y="507.60" font-size="15" fill="#0a0ae8" text-anchor="start" stroke="#0a0ae8" stroke-width="0.3">tcf</text>
<text x="261.20" y="535.90" font-size="15" fill="#0a0ae8" text-anchor="start" stroke="#0a0ae8" stroke-width="0.3">gain</text>
<text x="30.00" y="507.80" font-size="15.5" fill="#000" text-anchor="start" stroke="#000" stroke-width="0.1">Kg/m</text>
<text x="107.50" y="507.80" font-size="15.5" fill="#000" text-anchor="start" stroke="#000" stroke-width="0.1">km/h</text>
<text x="189.00" y="507.80" font-size="15.5" fill="#000" text-anchor="start" stroke="#000" stroke-width="0.1">rpm</text>
<rect x="391.00" y="460.00" width="69.00" height="2.00" fill="#b8d8b8" />
<rect x="391.00" y="460.00" width="2.00" height="24.00" fill="#b8d8b8" />
<rect x="393.00" y="462.00" width="67.00" height="22.00" fill="#000030" />
<rect x="394.00" y="463.00" width="67.00" height="22.00" fill="#fffff8" />
<rect x="394.00" y="463.00" width="66.00" height="21.00" fill="#ffff00" />
<rect x="391.00" y="517.00" width="69.00" height="2.00" fill="#b8d8b8" />
<rect x="391.00" y="517.00" width="2.00" height="23.00" fill="#b8d8b8" />
<rect x="393.00" y="519.00" width="67.00" height="21.00" fill="#000030" />
<rect x="394.00" y="520.00" width="67.00" height="21.00" fill="#fffff8" />
<rect x="394.00" y="520.00" width="66.00" height="20.00" fill="#00ff00" />
<text x="421.97" y="478.20" font-size="15" fill="#000" text-anchor="start" stroke="#000" stroke-width="0.15">361.3</text>
<text x="421.97" y="534.40" font-size="15" fill="#000" text-anchor="start" stroke="#000" stroke-width="0.15">431.2</text>
<rect x="472.00" y="460.00" width="69.00" height="2.00" fill="#b8d8b8" />
<rect x="472.00" y="460.00" width="2.00" height="24.00" fill="#b8d8b8" />
<rect x="474.00" y="462.00" width="67.00" height="22.00" fill="#000030" />
<rect x="475.00" y="463.00" width="67.00" height="22.00" fill="#fffff8" />
<rect x="475.00" y="463.00" width="66.00" height="21.00" fill="#ffff00" />
<rect x="472.00" y="517.00" width="69.00" height="2.00" fill="#b8d8b8" />
<rect x="472.00" y="517.00" width="2.00" height="23.00" fill="#b8d8b8" />
<rect x="474.00" y="519.00" width="67.00" height="21.00" fill="#000030" />
<rect x="475.00" y="520.00" width="67.00" height="21.00" fill="#fffff8" />
<rect x="475.00" y="520.00" width="66.00" height="20.00" fill="#00ff00" />
<text x="515.48" y="478.20" font-size="15" fill="#000" text-anchor="start" stroke="#000" stroke-width="0.15">171</text>
<text x="515.48" y="534.40" font-size="15" fill="#000" text-anchor="start" stroke="#000" stroke-width="0.15">172</text>
<rect x="553.00" y="460.00" width="69.00" height="2.00" fill="#b8d8b8" />
<rect x="553.00" y="460.00" width="2.00" height="24.00" fill="#b8d8b8" />
<rect x="555.00" y="462.00" width="67.00" height="22.00" fill="#000030" />
<rect x="556.00" y="463.00" width="67.00" height="22.00" fill="#fffff8" />
<rect x="556.00" y="463.00" width="66.00" height="21.00" fill="#ffff00" />
<rect x="553.00" y="517.00" width="69.00" height="2.00" fill="#b8d8b8" />
<rect x="553.00" y="517.00" width="2.00" height="23.00" fill="#b8d8b8" />
<rect x="555.00" y="519.00" width="67.00" height="21.00" fill="#000030" />
<rect x="556.00" y="520.00" width="67.00" height="21.00" fill="#fffff8" />
<rect x="556.00" y="520.00" width="66.00" height="20.00" fill="#00ff00" />
<text x="588.13" y="478.20" font-size="15" fill="#000" text-anchor="start" stroke="#000" stroke-width="0.15">5372</text>
<text x="588.13" y="534.40" font-size="15" fill="#000" text-anchor="start" stroke="#000" stroke-width="0.15">5390</text>
<rect x="686.00" y="460.00" width="69.00" height="2.00" fill="#b8d8b8" />
<rect x="686.00" y="460.00" width="2.00" height="24.00" fill="#b8d8b8" />
<rect x="688.00" y="462.00" width="67.00" height="22.00" fill="#000030" />
<rect x="689.00" y="463.00" width="67.00" height="22.00" fill="#fffff8" />
<rect x="689.00" y="463.00" width="66.00" height="21.00" fill="#0000ff" />
<text x="716.77" y="478.20" font-size="15" fill="#fff" text-anchor="start" stroke="#fff" stroke-width="0.2">3.545</text>
<rect x="686.00" y="488.00" width="69.00" height="2.00" fill="#b8d8b8" />
<rect x="686.00" y="488.00" width="2.00" height="23.00" fill="#b8d8b8" />
<rect x="688.00" y="490.00" width="67.00" height="21.00" fill="#000030" />
<rect x="689.00" y="491.00" width="67.00" height="21.00" fill="#fffff8" />
<rect x="689.00" y="491.00" width="66.00" height="20.00" fill="#0000ff" />
<text x="725.11" y="505.90" font-size="15" fill="#fff" text-anchor="start" stroke="#fff" stroke-width="0.2">1.25</text>
<rect x="686.00" y="517.00" width="69.00" height="2.00" fill="#b8d8b8" />
<rect x="686.00" y="517.00" width="2.00" height="23.00" fill="#b8d8b8" />
<rect x="688.00" y="519.00" width="67.00" height="21.00" fill="#000030" />
<rect x="689.00" y="520.00" width="67.00" height="21.00" fill="#fffff8" />
<rect x="689.00" y="520.00" width="66.00" height="20.00" fill="#0000ff" />
<text x="725.11" y="534.80" font-size="15" fill="#fff" text-anchor="start" stroke="#fff" stroke-width="0.2">69.9</text>
<text x="645.20" y="480.20" font-size="15" fill="#0a0ae8" text-anchor="start" stroke="#0a0ae8" stroke-width="0.3">ratio</text>
<text x="645.20" y="507.60" font-size="15" fill="#0a0ae8" text-anchor="start" stroke="#0a0ae8" stroke-width="0.3">tcf</text>
<text x="645.20" y="535.90" font-size="15" fill="#0a0ae8" text-anchor="start" stroke="#0a0ae8" stroke-width="0.3">gain</text>
<text x="413.80" y="507.80" font-size="15.5" fill="#000" text-anchor="start" stroke="#000" stroke-width="0.1">PS</text>
<text x="494.00" y="507.80" font-size="15.5" fill="#000" text-anchor="start" stroke="#000" stroke-width="0.1">km/h</text>
<text x="573.00" y="507.80" font-size="15.5" fill="#000" text-anchor="start" stroke="#000" stroke-width="0.1">rpm</text>
<text x="306.00" y="572.20" font-size="9" fill="#111" text-anchor="start" font-weight="bold" textLength="30.20" lengthAdjust="spacingAndGlyphs" >Folder</text>
<text x="307.60" y="590.40" font-size="9" fill="#111" text-anchor="start" font-weight="bold" textLength="31.40" lengthAdjust="spacingAndGlyphs" >Run ID</text>
<text x="317.00" y="608.30" font-size="9" fill="#111" text-anchor="start" font-weight="bold" textLength="20.80" lengthAdjust="spacingAndGlyphs" >Date</text>
<rect x="342.00" y="561.50" width="119.00" height="12.00" fill="#303048" />
<rect x="343.00" y="562.50" width="118.00" height="11.00" fill="#fffdf4" />
<rect x="342.00" y="579.50" width="119.00" height="12.00" fill="#303048" />
<rect x="343.00" y="580.50" width="118.00" height="11.00" fill="#fffdf4" />
<rect x="342.00" y="597.50" width="119.00" height="12.00" fill="#303048" />
<rect x="343.00" y="598.50" width="118.00" height="11.00" fill="#fffdf4" />
<rect x="344.00" y="580.50" width="43.00" height="10.50" fill="#00f000" />
<text x="344.00" y="571.40" font-size="9.4" fill="#000" text-anchor="start" textLength="69.00" lengthAdjust="spacingAndGlyphs" stroke="#000" stroke-width="0.2">SUBARU-GVF</text>
<text x="388.40" y="589.50" font-size="9.4" fill="#000" text-anchor="start" textLength="21.10" lengthAdjust="spacingAndGlyphs" stroke="#000" stroke-width="0.2">1-25</text>
<text x="344.00" y="607.50" font-size="9.4" fill="#000" text-anchor="start" textLength="107.70" lengthAdjust="spacingAndGlyphs" xml:space="preserve" stroke="#000" stroke-width="0.2">11-Apr-2015 &#160;21:25:36</text>

<g font-family='"Liberation Sans", sans-serif' font-weight="bold" font-style="italic" transform="translate(81.5,0) skewX(-8)">
<text x="490" y="595.2" font-size="29.5" fill="#2458c8" textLength="127" lengthAdjust="spacingAndGlyphs" stroke="#2458c8" stroke-width="2">Dyna</text>
<text x="621" y="595.2" font-size="29.5" fill="#d01c24" textLength="120" lengthAdjust="spacingAndGlyphs" stroke="#d01c24" stroke-width="2">pack</text>
<text x="487.5" y="588.6" font-size="29.5" fill="#fff" textLength="127" lengthAdjust="spacingAndGlyphs" stroke="#fff" stroke-width="4.2">Dyna</text>
<text x="618.5" y="588.6" font-size="29.5" fill="#fff" textLength="120" lengthAdjust="spacingAndGlyphs" stroke="#fff" stroke-width="4.2">pack</text>
<text x="487.5" y="588.6" font-size="29.5" fill="#c4102e" textLength="127" lengthAdjust="spacingAndGlyphs" stroke="#c4102e" stroke-width="2.3">Dyna</text>
<text x="618.5" y="588.6" font-size="29.5" fill="#1c5ac8" textLength="120" lengthAdjust="spacingAndGlyphs" stroke="#1c5ac8" stroke-width="2.3">pack</text>
</g>
<path d="M731 582 L747 576.5 L745 580.5 L733 585 Z" fill="#d01c24"/>
<text x="553" y="607" font-family='"Liberation Sans", sans-serif' font-weight="bold" font-size="8" fill="#1a2a88" stroke="#1a2a88" stroke-width="0.45" textLength="54.6" lengthAdjust="spacing">CHASSIS</text>
<text x="636.4" y="607" font-family='"Liberation Sans", sans-serif' font-weight="bold" font-size="8" fill="#1a2a88" stroke="#1a2a88" stroke-width="0.45" textLength="107" lengthAdjust="spacing">DYNAMOMETERS</text>

</svg>
</body></html>
